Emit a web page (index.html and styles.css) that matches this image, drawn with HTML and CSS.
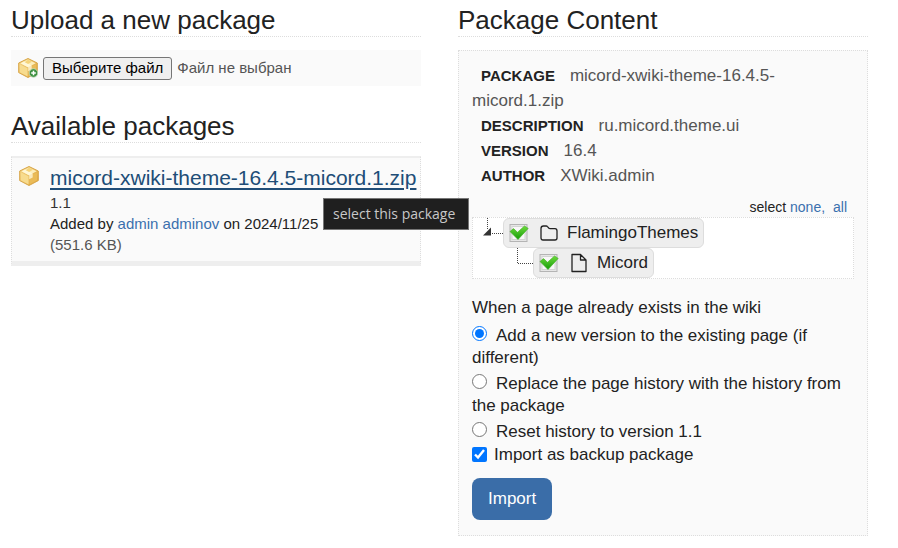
FILE: index.html
```
<!DOCTYPE html>
<html lang="en">
<head>
<meta charset="utf-8">
<title>Import</title>
<link rel="stylesheet" href="styles.css">
</head>
<body>
<svg class="defs" aria-hidden="true">
  <defs>
    <linearGradient id="gold" x1="0" y1="0" x2="1" y2="1"><stop offset="0" stop-color="#f6d98c"/><stop offset="1" stop-color="#d99a2b"/></linearGradient>
    <linearGradient id="leaf" x1="0" y1="0" x2="0" y2="1"><stop offset="0" stop-color="#6fdc3c"/><stop offset="1" stop-color="#149a08"/></linearGradient>
    <symbol id="box" viewBox="0 0 20 20">
      <path d="M10 .5 19.300 5v9.600L10 19.500.7 14.600V5z" fill="url(#gold)" stroke="#d8a649" stroke-width="1"/>
      <path d="M10 1.600 17.700 5.300 10 9.300 2.300 5.300z" fill="#fdeebb"/>
      <path d="M1.700 6.200 9.600 10.200v8.200L1.700 14.200z" fill="#f7dc8f"/>
      <path d="M10.400 10.200 18.300 6.200v8L10.400 18.400z" fill="#eabb58"/>
      <path d="M5.800 3.600 13.700 7.400v4.200l-3.500 1.600V9.400L3 5.500z" fill="#fffadf" opacity=".75"/>
      <path d="m10 1.800 3.800 1.900-3.700 2.300-3.200-1.800z" fill="#f1c95f" opacity=".7"/>
    </symbol>
    <symbol id="check" viewBox="0 0 20 20">
      <rect x="1" y="1.500" width="17" height="17" fill="#e6e6e6" stroke="#b4b4b4"/>
      <rect x="3" y="3.500" width="13" height="13" fill="#f8f8f8" stroke="#d4d4d4"/>
      <path d="M1 8.500 4.500 5.600l4 3.700L15.500 3l3.700 2.400L9 16.500z" fill="url(#leaf)" stroke="#3fae22" stroke-width=".6"/>
    </symbol>
  </defs>
</svg>
<main class="page">
  <div class="column">
    <section>
      <h2>Upload a new package</h2>
      <form class="upload">
        <svg class="upload-icon" viewBox="0 0 20 20" aria-hidden="true"><use href="#box" width="20" height="20"/><circle cx="15.500" cy="15" r="4.300" fill="#3f9142" stroke="#c9dfc4" stroke-width=".8"/><path d="M15.500 12.700v4.600M13.200 15h4.600" stroke="#fff" stroke-width="1.500"/></svg>
        <button type="button" class="file-button">Выберите файл</button>
        <span class="file-name">Файл не выбран</span>
      </form>
    </section>
    <section>
      <h2>Available packages</h2>
      <ul class="packages">
        <li class="package">
          <svg class="box-icon" aria-hidden="true"><use href="#box"/></svg>
          <div class="package-info">
            <div class="package-title"><a class="package-link" href="#">micord-xwiki-theme-16.4.5-micord.1.zip</a><span class="tooltip" role="tooltip">select this package</span></div>
            <div class="package-version">1.1</div>
            <div>Added by <a href="#">admin adminov</a> on 2024/11/25 1</div>
            <div class="package-size">(551.6 KB)</div>
          </div>
        </li>
      </ul>
    </section>
  </div>
  <section class="column">
    <h2>Package Content</h2>
    <form class="content">
      <dl class="details">
        <div><dt>Package</dt><dd>micord-xwiki-theme-16.4.5-micord.1.zip</dd></div>
        <div><dt>Description</dt><dd>ru.micord.theme.ui</dd></div>
        <div><dt>Version</dt><dd>16.4</dd></div>
        <div><dt>Author</dt><dd>XWiki.admin</dd></div>
      </dl>
      <div class="select-links">select <a href="#">none,</a> <a class="all" href="#">all</a></div>
      <ul class="tree">
        <li>
          <div class="row">
            <svg class="branch" viewBox="0 0 30 30" aria-hidden="true"><path d="M14.500 0v11M19 15.500h11" fill="none" stroke="#444" stroke-dasharray="1 1"/><path d="M18 9.500v8h-8z" fill="#333"/></svg>
            <a class="node" href="#">
              <svg class="check" aria-hidden="true"><use href="#check"/></svg>
              <svg class="type" viewBox="0 0 20 20" aria-hidden="true"><path d="M2 15V5.500Q2 3 4.500 3h2.700q.8 0 1.300.6l1.400 1.600q.4.500 1.100.5h5Q18 5.700 18 8v7q0 2-2 2H4q-2 0-2-2z" fill="none" stroke="#222" stroke-width="1.300"/></svg>
              FlamingoThemes</a>
          </div>
          <ul>
            <li class="row">
              <svg class="branch" viewBox="0 0 30 30" aria-hidden="true"><path d="M14.500 0v15.500H30" fill="none" stroke="#444" stroke-dasharray="1 1"/></svg>
              <a class="node" href="#">
                <svg class="check" aria-hidden="true"><use href="#check"/></svg>
                <svg class="type" viewBox="0 0 20 20" aria-hidden="true"><path d="M3 1.500h8.500L17 7v11.500H3zM11.500 1.500V7H17" fill="none" stroke="#222" stroke-width="1.300" stroke-linejoin="round"/></svg>
                Micord</a>
            </li>
          </ul>
        </li>
      </ul>
      <fieldset>
        <legend>When a page already exists in the wiki</legend>
        <div class="option"><label><input type="radio" name="history" checked>Add a new version to the existing page (if different)</label></div>
        <div class="option"><label><input type="radio" name="history">Replace the page history with the history from the package</label></div>
        <div class="option"><label><input type="radio" name="history">Reset history to version 1.1</label></div>
      </fieldset>
      <div class="backup"><label><input type="checkbox" checked>Import as backup package</label></div>
      <button type="button" class="import">Import</button>
    </form>
  </section>
</main>
</body>
</html>
```
FILE: styles.css
```
* { box-sizing: border-box; }
body {
  margin: 0;
  background: #fff;
  color: #222;
  font: 17px/22px "Liberation Sans", Arial, sans-serif;
}
a { color: #3a70ae; text-decoration: none; }
ul, dl, dd, fieldset { margin: 0; padding: 0; border: 0; list-style: none; }
.defs { position: absolute; width: 0; height: 0; }
.page {
  display: grid;
  grid-template-columns: repeat(2, minmax(0, 1fr));
  gap: 37px;
  align-items: start;
  padding: 5px 30px 12px 11px;
}
h2 {
  margin: 0 0 13px;
  border-bottom: 1px dotted #ddd;
  font-size: 26px;
  line-height: 31px;
  font-weight: normal;
}

.upload {
  display: flex;
  align-items: center;
  gap: 5px;
  height: 36px;
  margin-bottom: 25px;
  padding: 0 7px;
  background: #fafafa;
}
.upload-icon, .box-icon { flex: none; width: 20px; height: 20px; }
.file-button {
  height: 23px;
  padding: 0 8px;
  border: 1px solid #767676;
  border-radius: 3px;
  background: #efefef;
  color: #000;
  font: 15px/20px "Liberation Sans", Arial, sans-serif;
}
.file-name { color: #555; font-size: 15px; }

.packages {
  border: 1px dotted #ddd;
  border-top: 2px solid #eee;
  border-bottom: 5px solid #eee;
  background: #fafafa;
}
.package { display: flex; gap: 11px; padding: 8px 3px 6px 7px; }
.package-info { flex: 1; min-width: 0; font-size: 15px; line-height: 21px; }
.package-title { position: relative; line-height: 24px; }
.package-link {
  color: #204d77;
  font-size: 21px;
  text-decoration: underline;
  text-decoration-thickness: 2px;
  text-underline-offset: 3px;
  white-space: nowrap;
}
.package-version { color: #333; }
.package-size { color: #555; }
.tooltip {
  position: absolute;
  top: 32px;
  left: 273px;
  padding: 0 13px 0 9px;
  border: 1px solid #767676;
  background: #1f1f1f;
  color: #c8c8c8;
  font: 14px/30px "Open Sans", "Noto Sans", sans-serif;
  white-space: nowrap;
}

.content {
  padding: 12px 13px 15px;
  border: 1px dotted #ddd;
  background: #fafafa;
}
.details { line-height: 25px; }
dt {
  display: inline;
  padding: 0 15px 0 9px;
  font-size: 15px;
  font-weight: bold;
  text-transform: uppercase;
}
dd { display: inline; color: #555; }
.select-links {
  padding: 9px 7px 0;
  font-size: 14px;
  line-height: 20px;
  text-align: right;
}
.all { margin-left: 4px; }
.tree { border: 1px dotted #ddd; background: #fff; }
.tree ul { padding-left: 30px; }
.row { display: flex; }
.branch { width: 30px; height: 30px; }
.node {
  display: flex;
  align-items: center;
  height: 30px;
  padding: 0 5px;
  border: 1px solid #ddd;
  border-radius: 6px;
  background: #eee;
  color: #222;
}
.check { width: 20px; height: 20px; margin-right: 10px; }
.type { width: 20px; height: 20px; margin-right: 8px; }
legend { padding: 18px 0 2px; }
.option { padding-top: 4px; }
input { width: 15px; height: 15px; accent-color: #0075ff; }
input[type="radio"] { margin: 0 9px 0 0; }
input[type="checkbox"] { margin: 0 7px 0 0; vertical-align: -2px; }
.backup { padding-top: 1px; }
.import {
  height: 42px;
  margin-top: 12px;
  padding: 0 16px;
  border: 0;
  border-radius: 8px;
  background: #3a6da8;
  color: #fff;
  font: 17px/24px "Liberation Sans", Arial, sans-serif;
}
```
